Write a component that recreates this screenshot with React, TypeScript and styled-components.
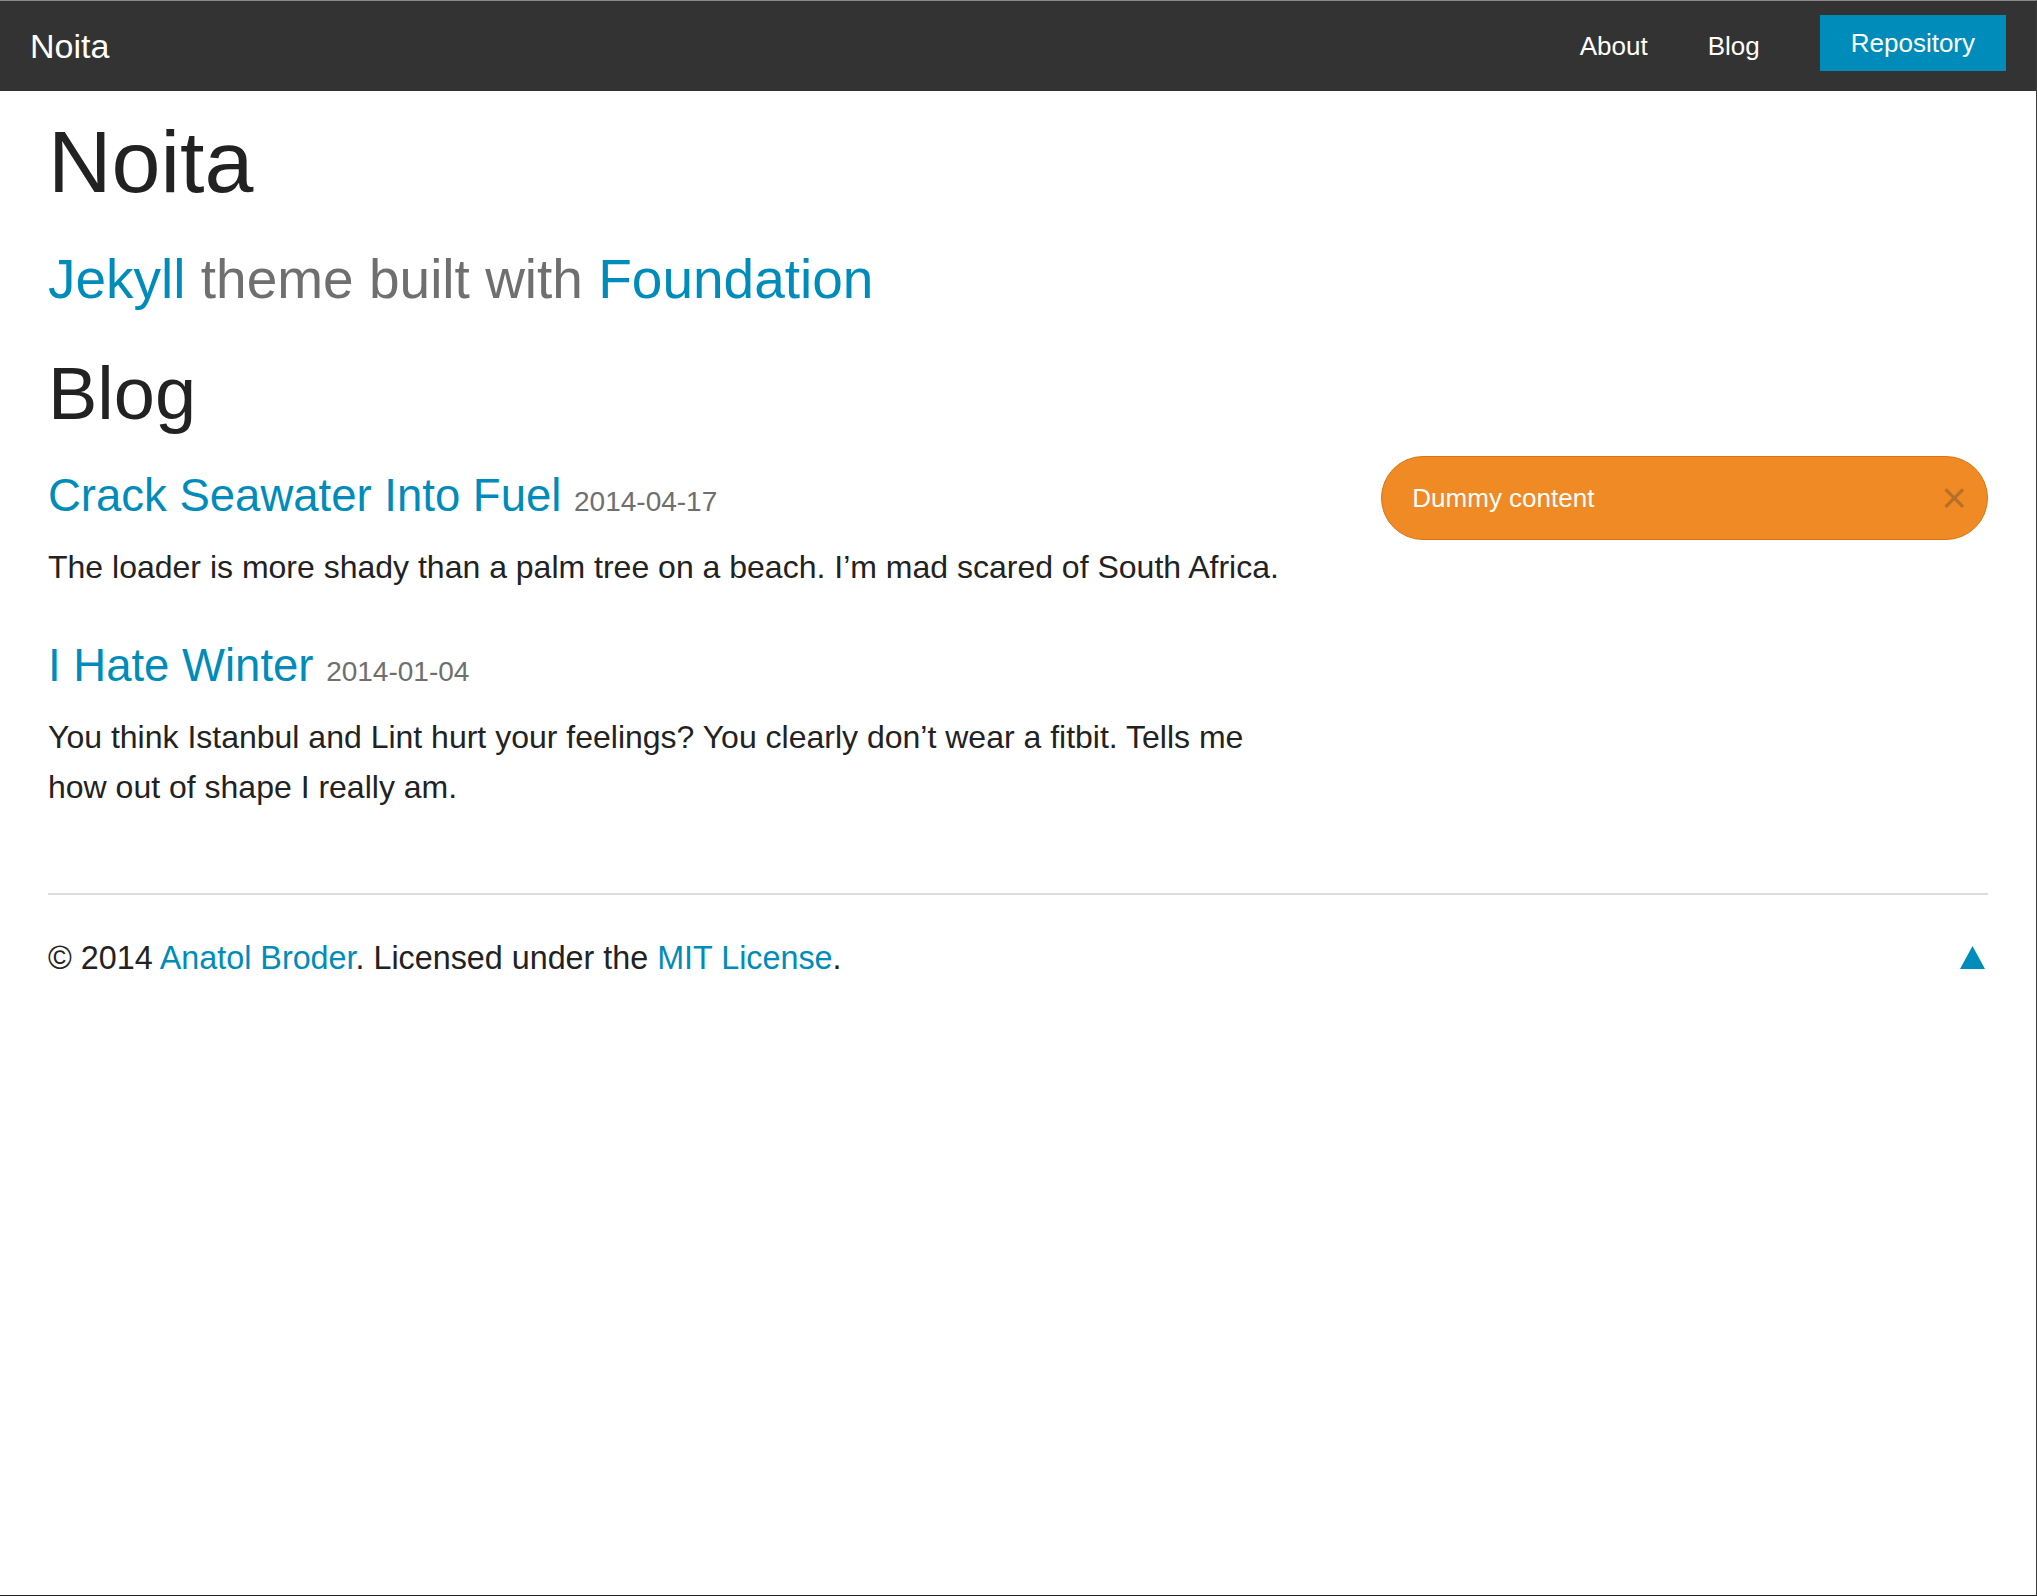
import React from "react";
import styled, { createGlobalStyle } from "styled-components";

const Global = createGlobalStyle`
  html, body {
    margin: 0;
    padding: 0;
    background: #ffffff;
  }
  body {
    font-family: "Liberation Sans", Arial, Helvetica, sans-serif;
    color: #222222;
  }
  * { box-sizing: border-box; }
`;

const Page = styled.div`
  min-height: 1596px;
  border-top: 1px solid #8a8a8a;
  border-right: 1px solid #3a3a3a;
  border-bottom: 1px solid #222222;
  background: #ffffff;
`;

const TopBar = styled.nav`
  height: 90px;
  background: #333333;
  display: flex;
  align-items: flex-start;
  justify-content: space-between;
`;

const BarTitle = styled.a`
  display: block;
  padding-left: 30px;
  line-height: 90px;
  font-size: 34px;
  color: #ffffff;
  text-decoration: none;
`;

const NavList = styled.ul`
  list-style: none;
  margin: 0;
  padding: 0;
  display: flex;
  align-items: flex-start;
`;

const NavItem = styled.li`
  padding: 0 30px;
`;

const NavLink = styled.a`
  display: block;
  line-height: 90px;
  font-size: 26px;
  color: #ffffff;
  text-decoration: none;
`;

const NavButton = styled.a`
  display: block;
  margin-top: 14px;
  height: 56px;
  line-height: 56px;
  padding: 0 31px;
  background: #008cba;
  color: #ffffff;
  font-size: 26px;
  text-decoration: none;
`;

const Row = styled.div<{ $top?: number }>`
  max-width: 2000px;
  margin: ${(p) => p.$top ?? 0}px auto 0;
  display: flex;
  align-items: flex-start;
`;

const Column = styled.div<{ $span: number; $padTop?: number }>`
  flex: 0 0 ${(p) => (p.$span / 12) * 100}%;
  padding: ${(p) => p.$padTop ?? 0}px 30px 0;
  min-width: 0;
`;

const SiteTitle = styled.h1`
  margin: 9px 0 0;
  font-size: 88px;
  line-height: 123px;
  font-weight: normal;
  color: #222222;
`;

const Subheader = styled.h3`
  margin: 18px 0 0;
  font-size: 55px;
  line-height: 77px;
  font-weight: normal;
  color: #6f6f6f;
`;

const Link = styled.a`
  color: #008cba;
  text-decoration: none;
`;

const SectionTitle = styled.h2`
  margin: 24px 0 0;
  font-size: 74px;
  line-height: 104px;
  font-weight: normal;
  color: #222222;
`;

const PostList = styled.div`
  display: flex;
  flex-direction: column;
  gap: 42px;
  max-width: 1262px;
`;

const Post = styled.article``;

const PostTitle = styled.h4`
  margin: 0 0 8px;
  font-size: 45.5px;
  line-height: 64px;
  font-weight: normal;
`;

const PostDate = styled.small`
  font-size: 28px;
  color: #6f6f6f;
`;

const Excerpt = styled.p`
  margin: 0;
  font-size: 32px;
  line-height: 50px;
  color: #222222;
`;

const Alert = styled.div`
  display: flex;
  align-items: center;
  justify-content: space-between;
  padding: 28px 20px 28px 30px;
  background: #f08a24;
  border: 1px solid #d9760f;
  border-radius: 1000px;
  color: #ffffff;
  font-size: 26px;
  line-height: 26px;
`;

const Close = styled.a`
  font-size: 44px;
  line-height: 26px;
  color: #333333;
  opacity: 0.3;
  text-decoration: none;
  cursor: pointer;
`;

const Footer = styled.footer`
  margin-top: 81px;
`;

const Rule = styled.hr`
  margin: 0;
  border: 0;
  border-top: 2px solid #dddddd;
  height: 0;
`;

const FooterLine = styled.div`
  margin-top: 38px;
  display: flex;
  justify-content: space-between;
  align-items: flex-start;
`;

const FooterText = styled.p`
  margin: 0;
  font-size: 32.3px;
  line-height: 50px;
  color: #222222;
`;

const TopLink = styled.a`
  display: block;
  margin-top: 13px;
  margin-right: 3px;
  line-height: 0;
`;

export default function App() {
  return (
    <>
      <Global />
      <Page>
        <TopBar>
          <BarTitle href="#">Noita</BarTitle>
          <NavList>
            <NavItem>
              <NavLink href="#">About</NavLink>
            </NavItem>
            <NavItem>
              <NavLink href="#">Blog</NavLink>
            </NavItem>
            <NavItem>
              <NavButton href="#">Repository</NavButton>
            </NavItem>
          </NavList>
        </TopBar>

        <Row>
          <Column $span={12}>
            <SiteTitle>Noita</SiteTitle>
            <Subheader>
              <Link href="#">Jekyll</Link> theme built with{" "}
              <Link href="#">Foundation</Link>
            </Subheader>
            <SectionTitle>Blog</SectionTitle>
          </Column>
        </Row>

        <Row $top={10}>
          <Column $span={8} $padTop={8}>
            <PostList>
              <Post>
                <PostTitle>
                  <Link href="#">Crack Seawater Into Fuel</Link>{" "}
                  <PostDate>2014-04-17</PostDate>
                </PostTitle>
                <Excerpt>
                  The loader is more shady than a palm tree on a beach. I’m mad
                  scared of South Africa.
                </Excerpt>
              </Post>
              <Post>
                <PostTitle>
                  <Link href="#">I Hate Winter</Link>{" "}
                  <PostDate>2014-01-04</PostDate>
                </PostTitle>
                <Excerpt>
                  You think Istanbul and Lint hurt your feelings? You clearly
                  don’t wear a fitbit. Tells me how out of shape I really am.
                </Excerpt>
              </Post>
            </PostList>
          </Column>
          <Column $span={4}>
            <Alert>
              <span>Dummy content</span>
              <Close>×</Close>
            </Alert>
          </Column>
        </Row>

        <Row>
          <Column $span={12}>
            <Footer>
              <Rule />
              <FooterLine>
                <FooterText>
                  © 2014 <Link href="#">Anatol Broder</Link>. Licensed under the{" "}
                  <Link href="#">MIT License</Link>.
                </FooterText>
                <TopLink href="#">
                  <svg width="25" height="23" viewBox="0 0 25 23">
                    <polygon points="12.5,0 25,23 0,23" fill="#008cba" />
                  </svg>
                </TopLink>
              </FooterLine>
            </Footer>
          </Column>
        </Row>
      </Page>
    </>
  );
}
